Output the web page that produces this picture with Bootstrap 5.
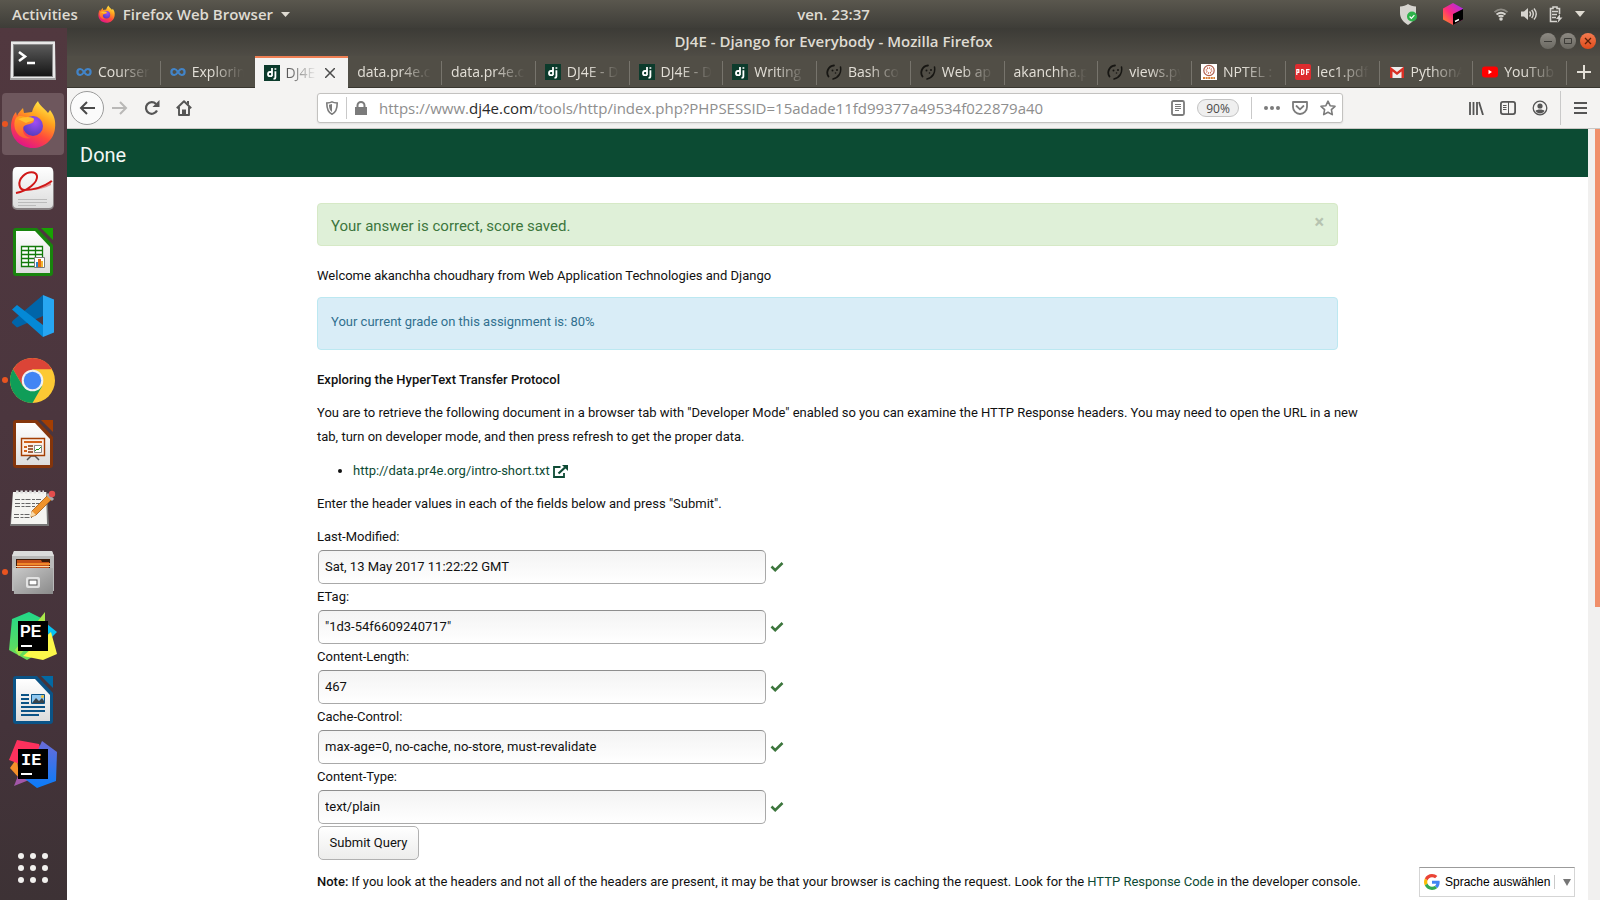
<!DOCTYPE html>
<html lang="en">
<head>
<meta charset="utf-8">
<meta name="viewport" content="width=device-width, initial-scale=1">
<title>DJ4E - Django for Everybody</title>
<link href="https://cdn.jsdelivr.net/npm/bootstrap@5.3.0/dist/css/bootstrap.min.css" rel="stylesheet">
<style>
  body { font-family: "Open Sans", "Noto Sans", sans-serif; font-size: 15px; background: #fff; }
  svg { display: block; flex: none; }
  a { text-decoration: none; }
  button { font: inherit; color: inherit; }
  .plain-btn { background: none; border: 0; padding: 0; }

  /* desktop panel */
  .desk-panel { display: grid; grid-template-columns: 67px 1fr auto 1fr; height: 28px; line-height: 20px; background: linear-gradient(#5a574e, #3e3d38); color: #dfdbd2; font-weight: 600; }
  .desk-left { grid-column: 1 / 3; padding-left: 12px; gap: 20px; }
  .desk-right { padding-right: 15px; }
  .tray-shield { margin-right: 26px; }
  .tray-cube { margin-right: 30px; }
  .tray-icon { margin-right: 12px; }

  /* launcher */
  .dock { width: 67px; background: linear-gradient(#51383f, #4b363e 45%, #44333a 80%, #3d3235); }
  .dock-item { height: 64px; width: 67px; padding-right: 2px; position: relative; }
  .dock-item.current::before { content: ""; position: absolute; inset: 1px 3px 1px 2px; border-radius: 4px; background: #6e575d; }
  .dock-item.running::after { content: ""; position: absolute; left: 2px; top: 29px; width: 6px; height: 6px; border-radius: 50%; background: #e95420; }
  .dock-item svg { position: relative; }

  /* browser window */
  .browser-col { min-width: 0; }
  .fill-row { min-height: 0; }
  .title-row { display: grid; grid-template-columns: 1fr auto 1fr; height: 28px; background: linear-gradient(#3c3b36, #4f4c45); color: #dfdbd2; font-weight: 600; line-height: 20px; padding-bottom: 2px; }
  .win-dot { width: 16px; height: 16px; border-radius: 50%; background: linear-gradient(#8d8a83, #6b6962); }
  .win-dot.close-dot { background: linear-gradient(#f47b50, #df4b1b); }
  .tab-row { height: 32px; background: #514e46; border-bottom: 1px solid #38362f; }
  .tab-item { flex: 1 1 0; min-width: 0; padding: 0 9px; gap: 6px; color: #e3dfd7; font-size: 14px; position: relative; height: 31px; }
  .tab-item::after { content: ""; position: absolute; right: 0; top: 5px; height: 24px; width: 1px; background: #77746c; }
  .tab-item.on { background: #f4f3f2; color: #4c4c4c; height: 32px; border-top: 2px solid #ef7f54; }
  .tab-item.on::after, .tab-item.before-on::after { display: none; }
  .tab-label { overflow: hidden; white-space: nowrap; flex: 1; line-height: 22px; -webkit-mask-image: linear-gradient(to left, transparent 2px, #000 34px); mask-image: linear-gradient(to left, transparent 2px, #000 34px); }
  .new-tab { width: 33px; color: #e3dfd7; }

  .tool-row { height: 41px; background: #f4f3f2; border-bottom: 1px solid #c9c7c5; color: #5a5a5a; }
  .tool-left { width: 250px; padding-left: 3px; }
  .tool-left .plain-btn { width: 32px; }
  .tool-left .back-btn { width: 34px; height: 34px; border: 1px solid #9b9b9b; border-radius: 50%; background: #fbfbfb; }
  .tool-right { width: 257px; }
  .tool-right .menu-btn { margin: 0 13px; }
  .url-box { height: 30px; background: #fff; border: 1px solid #c3c2c0; border-radius: 3px; box-shadow: 0 1px 2px rgba(0,0,0,.08); color: #7b7b7b; padding-right: 6px; }
  .url-text { line-height: 24px; color: #8e8e8e; white-space: nowrap; overflow: hidden; }
  .url-text b { font-weight: 400; color: #2a2a2a; }
  .url-tools { gap: 12px; }
  .zoom-pill { width: 42px; height: 18px; line-height: 15px; border: 1px solid #c3c3c3; border-radius: 9px; background: #efefef; color: #4a4a4a; font-size: 12px; }
  .v-line { width: 1px; height: 22px; background: #c9c9c9; }
  .v-line.tall { height: 34px; margin-left: 12px; }
  .v-line.short { height: 14px; }

  /* the course tool page */
  .web-view { font-family: Roboto, sans-serif; font-size: 13px; line-height: 24px; color: #111; }
  .web-view a { color: #0d4a34; }
  .done-bar { background: #0c4b33; height: 48px; padding: 3px 13px 0; font-size: 20px; }
  .done-bar a { color: #f3f7f5; }
  .tool-body { max-width: 1021px; padding-top: 26px; }
  .flash { border: 1px solid; border-radius: 4px; padding: 0 13px; margin-bottom: 18px; }
  .flash-ok { color: #3c763d; background: #dff0d8; border-color: #d6e9c6; font-size: 15px; height: 43px; padding-top: 3px; }
  .flash-info { color: #31708f; background: #d9edf7; border-color: #bce8f1; padding-top: 12px; padding-bottom: 15px; }
  .flash-x { color: #b6c3b0; font: 700 18px/18px Roboto, sans-serif; margin-bottom: 9px; }
  .tool-body p { margin-bottom: 9px; }
  .tool-body .para-gap { margin-bottom: 10px; }
  .tool-body .long-copy { margin-right: -24px; }
  .tool-body ul { margin-bottom: 9px; padding-left: 36px; }
  .tool-body b { font-weight: 500; }
  .field-box { width: 448px; height: 34px; margin: 1px 4px 1px 1px; padding: 0 6px 1px; border: 1px solid #a9a9a9; border-top-color: #8e8e8e; border-radius: 5px; background: linear-gradient(#f3f3f3, #fff); color: #111; }
  .send-btn { height: 34px; width: 101px; margin: 1px 0 10px 1px; border: 1px solid #b1b1b1; border-radius: 5px; background: linear-gradient(#fff, #ededec); color: #111; }
  .lang-pick { position: absolute; right: 13px; bottom: 3px; width: 156px; height: 30px; border: 1px solid #d5d5d5; border-top-color: #9b9b9b; background: #fff; padding-left: 4px; }
  .lang-pick select { appearance: none; border: 0; background: none; padding: 0; margin-left: 5px; width: 109px; font: 12px/20px "Liberation Sans", sans-serif; color: #000; }
  .scroll-track { width: 12px; background: #f1f0ef; padding-left: 7px; }
  .scroll-thumb { height: 62%; background: #f08f6a; }
</style>
</head>
<body class="vh-100 d-flex flex-column overflow-hidden">

<svg width="0" height="0" class="position-absolute" aria-hidden="true">
  <defs>
    <linearGradient id="ffBody" x1="0.8" y1="0" x2="0.3" y2="1"><stop offset="0" stop-color="#fff44f"/><stop offset=".35" stop-color="#ffa21e"/><stop offset=".65" stop-color="#ff4a3c"/><stop offset="1" stop-color="#e0128c"/></linearGradient>
    <radialGradient id="ffGlobe" cx=".6" cy=".3" r=".8"><stop offset="0" stop-color="#a04df5"/><stop offset="1" stop-color="#4a3bb8"/></radialGradient>
    <linearGradient id="ffHead" x1="0" y1="0" x2="0" y2="1"><stop offset="0" stop-color="#ffa21f"/><stop offset="1" stop-color="#ff5a36"/></linearGradient>
    <linearGradient id="paper" x1="0" y1="0" x2="0" y2="1"><stop offset="0" stop-color="#fff"/><stop offset="1" stop-color="#dcdcdc"/></linearGradient>
    <linearGradient id="cubeA" x1="0" y1="1" x2="1" y2="0"><stop offset="0" stop-color="#ff9419"/><stop offset=".45" stop-color="#ff2a7b"/><stop offset="1" stop-color="#9c2bff"/></linearGradient>
    <linearGradient id="grayBox" x1="0" y1="0" x2="1" y2="1"><stop offset="0" stop-color="#c9c9c9"/><stop offset="1" stop-color="#8a8a8a"/></linearGradient>
    <linearGradient id="screen" x1="0" y1="0" x2="0" y2="1"><stop offset="0" stop-color="#5a5a5a"/><stop offset="1" stop-color="#161616"/></linearGradient>
    <linearGradient id="ieBlue" x1="0" y1="0" x2="0" y2="1"><stop offset="0" stop-color="#6b6bd8"/><stop offset="1" stop-color="#087cfa"/></linearGradient>
    <linearGradient id="peGreen" x1="0" y1="0" x2="0" y2="1"><stop offset="0" stop-color="#21d789"/><stop offset="1" stop-color="#6fdd55"/></linearGradient>
    <symbol id="firefox" viewBox="0 0 46 48">
      <path fill="url(#ffBody)" d="M28 1c1 4 7 8 10 12l2-3c4 5 6 11 5 18-1 12-11 20-22 20C10 48 1 38 1 27c0-6 2-12 5-15l1 4c1-3 4-6 6-8l1 5 8-1c1-4 3-8 6-11z"/>
      <circle cx="23" cy="26" r="10" fill="url(#ffGlobe)"/>
      <path fill="url(#ffHead)" d="M6 18c3-3 8-2 11 0 2 1 5 1 7 2 0 3-4 4-8 5-3 1-3 3-3 5 0 4 3 7 8 8-8 2-14-3-16-9-1-4-1-8 1-11z"/>
      <path fill="#ffc02e" d="M8 19c5-2 11-3 15-1 2 1 1 2-1 3-3 1-5 1-6 2z"/>
    </symbol>
    <symbol id="coursera" viewBox="0 0 16 16"><path fill="none" stroke="#4284c8" stroke-width="2.200" d="M8 8C6.500 5.600 5.500 5 4.400 5a3 3 0 0 0 0 6C6 11 7 9.500 8 8s2-3 3.600-3a3 3 0 0 1 0 6C10.500 11 9.500 10.400 8 8z"/></symbol>
    <symbol id="djicon" viewBox="0 0 16 16"><path fill="#0c3b2c" d="M0 0h16v16H0z"/><path fill="none" stroke="#fff" stroke-width="1.800" d="M8 3v8.200M8 7H5.900C4.500 7 4 8 4 9.200s.7 2 2 2H8M11.400 6.200v6c0 1.200-.6 1.600-1.900 1.600M11.400 3.200v1.600"/></symbol>
    <symbol id="pyany" viewBox="0 0 16 16"><g fill="none" stroke="#171613" stroke-linecap="round"><path stroke-width="1.800" d="M2.500 12.500C-.5 8 2.500 2 8 1.500"/><path stroke-width="1.500" d="M14.500 3C15.500 8.500 13 13.500 7 15"/></g><circle cx="6.500" cy="6.500" r="1" fill="#171613"/><circle cx="11" cy="6" r="1" fill="#171613"/><circle cx="9.500" cy="9" r=".8" fill="#171613"/></symbol>
    <symbol id="tick" viewBox="0 0 14 12"><path fill="none" stroke="#3c763d" stroke-width="2.600" d="M1.500 5.500 5.200 9.200 12.500 2"/></symbol>
  </defs>
</svg>

<header class="desk-panel align-items-center flex-shrink-0">
  <div class="desk-left d-flex align-items-center">
    <button class="plain-btn">Activities</button>
    <button class="plain-btn d-flex align-items-center gap-1"><svg width="17" height="18" class="me-1"><use href="#firefox"/></svg>Firefox Web Browser
      <svg width="9" height="5" class="ms-1"><path fill="#dfdbd2" d="M0 0h9L4.500 5z"/></svg></button>
  </div>
  <div>ven. 23:37</div>
  <div class="desk-right d-flex align-items-center justify-content-end">
    <svg width="18" height="21" viewBox="0 0 18 21" class="tray-shield"><path fill="#d6d4cf" d="M9 0c2 1.500 5 2.300 8 2.500V9c0 5-3 9-8 12C4 18 1 14 1 9V2.500C4 2.300 7 1.500 9 0z"/><circle cx="13" cy="12.500" r="5" fill="#2eb24a"/><path d="m10.600 12.500 1.800 1.800 3-3.200" fill="none" stroke="#fff" stroke-width="1.200"/></svg>
    <svg width="20" height="22" viewBox="0 0 20 22" class="tray-cube"><path fill="url(#cubeA)" d="M10 0l10 5.500v11L10 22 0 16.500v-11z"/><path fill="#000" d="M10 11l10-5v10.500L10 22z"/><path stroke="#fff" stroke-width="1.400" d="m12 18.500 4-2"/></svg>
    <svg width="16" height="14" viewBox="0 0 16 14" class="tray-icon"><g fill="none" stroke="#d6d4cf" stroke-width="1.800"><path d="M1.500 5.200c4-3.600 9-3.600 13 0" opacity=".45"/><path d="M3.500 7.500c3-2.400 6-2.400 9 0M5.500 9.600c1.700-1.200 3.300-1.200 5 0"/></g><circle cx="8" cy="12" r="1.800" fill="#d6d4cf"/></svg>
    <svg width="16" height="14" viewBox="0 0 16 14" class="tray-icon"><path fill="#d6d4cf" d="M0 4.500h3L7 1v12L3 9.500H0z"/><g fill="none" stroke="#d6d4cf" stroke-width="1.400"><path d="M8.500 4.500c1.300 1.500 1.300 3.500 0 5M10.700 3c2 2.500 2 5.500 0 8M13 1.500c2.700 3.300 2.700 7.700 0 11"/></g></svg>
    <svg width="14" height="17" viewBox="0 0 14 17" class="tray-icon"><path fill="none" stroke="#d6d4cf" stroke-width="1.600" d="M8 15.500H1.500v-13H4v-1.500h4v1.500h2.500V8"/><path stroke="#d6d4cf" stroke-width="1.500" d="M3 5.500h6M3 8.500h5M3 11.500h4"/><path fill="#d6d4cf" d="M11 8l-4 5h2.500L8.500 17l5-5.500H11z"/></svg>
    <svg width="10" height="6"><path fill="#dfdbd2" d="M0 0h10L5 6z"/></svg>
  </div>
</header>

<div class="fill-row d-flex flex-grow-1">
  <nav class="dock d-flex flex-column flex-shrink-0" aria-label="Launcher">
    <a href="#" class="dock-item d-flex align-items-center justify-content-center" aria-label="Terminal"><svg width="46" height="39" viewBox="0 0 46 39"><path fill="#a5a5a5" d="M1 0h44l1 39H0z"/><path fill="#e8e8e8" d="M1 1h44v36H1z"/><path fill="#8b8b8b" d="M3 3h40v33H3z"/><path fill="url(#screen)" d="M4 4h38v31H4z"/><path fill="none" stroke="#fff" stroke-width="2.600" d="m9 11 6 4.500-6 4.500M17 22h8"/></svg></a>
    <a href="#" class="dock-item current running d-flex align-items-center justify-content-center" aria-label="Firefox"><svg width="46" height="48"><use href="#firefox"/></svg></a>
    <a href="#" class="dock-item d-flex align-items-center justify-content-center" aria-label="Document viewer"><svg width="42" height="43" viewBox="0 0 42 43"><rect x="0" y="1" width="42" height="42" rx="5" fill="#8a8385"/><rect x="1" y="0" width="40" height="41" rx="4" fill="url(#paper)"/><path fill="none" stroke="#d01818" stroke-width="2" d="M4 26C16 24 26 15 25 9c-1-5-9-5-14 0-6 6-4 14 2 14 10 0 18-3 27-9"/><path fill="#d01818" opacity=".45" d="M13 23c10 0 19-3 26-10v5c-8 4-16 6-26 5z"/><path stroke="#bbb" d="M6 32.500h29M6 35.500h29M6 38.500h18"/></svg></a>
    <a href="#" class="dock-item d-flex align-items-center justify-content-center" aria-label="Calc"><svg width="40" height="48" viewBox="0 0 40 48"><path fill="#18840d" d="M3 0h21l16 17v28a3 3 0 0 1-3 3H3a3 3 0 0 1-3-3V3a3 3 0 0 1 3-3z"/><path fill="#18a303" d="M28 0h12v12z"/><path fill="url(#paper)" d="M3 3h19l15 16v26H3z"/><path fill="#fff" stroke="#127a0a" stroke-width="1.300" d="M8.500 18.500h21v20h-21zM8.500 22.500h21M8.500 26.500h21M8.500 30.500h21M8.500 34.500h21M15.500 18.500v20M22.500 18.500v20"/><path fill="#fff" stroke="#7a7a7a" d="M21.500 29.500h10v10h-10z"/><path fill="#2c85c7" d="M23 34h2v5h-2z"/><path fill="#e56a10" d="M25 31h3v8h-3z"/><path fill="#f2b632" d="M28 33h2v6h-2z"/></svg></a>
    <a href="#" class="dock-item d-flex align-items-center justify-content-center" aria-label="Visual Studio Code"><svg width="42" height="42" viewBox="0 0 42 42"><path fill="#0065a9" d="M31 10v11L5 32.500 0 28c0-1 0-1.500 1-2.500L31 0z"/><path fill="#0489d6" d="m5 10 26 20v12L0 14.500z"/><path fill="#27a6f2" d="m31 0 11 4.500v33L31 42z"/></svg></a>
    <a href="#" class="dock-item running d-flex align-items-center justify-content-center" aria-label="Chrome"><svg width="45" height="45" viewBox="-22.500 -22.500 45 45"><circle r="22.500" fill="#fcc934"/><path fill="#db4437" d="M-19.500-11.200A22.500 22.500 0 0 1 19.500-11.200H0L-9.700 5.600z"/><path fill="#0f9d58" d="M-19.500-11.200A22.500 22.500 0 0 0 0 22.500L9.700 5.600-9.700 5.600z"/><circle r="10.800" fill="#f1f1f1"/><circle r="8.700" fill="#4285f4"/></svg></a>
    <a href="#" class="dock-item d-flex align-items-center justify-content-center" aria-label="Impress"><svg width="40" height="48" viewBox="0 0 40 48"><path fill="#84350b" d="M3 0h21l16 17v28a3 3 0 0 1-3 3H3a3 3 0 0 1-3-3V3a3 3 0 0 1 3-3z"/><path fill="#a33e03" d="M28 0h12v12z"/><path fill="url(#paper)" d="M3 3h19l15 16v26H3z"/><path stroke="#555" stroke-width="1.500" fill="none" d="m14 40 4-4h4l4 4"/><path fill="#fbeee5" stroke="#a33e03" stroke-width="1.400" d="M8.500 18.500h23v17h-23z"/><path fill="#d36118" d="M11 21h18v2H11zM11 26h3v2h-3zM11 30h3v2h-3z"/><path stroke="#84350b" stroke-width="1.500" d="M15 26h5M15 29h5M15 32h5"/><path fill="#fff" stroke="#888" d="M21.500 25.500h7v7h-7z"/><path fill="none" stroke="#1d9b1d" d="m22 31 2-2 1 1 3-3"/></svg></a>
    <a href="#" class="dock-item d-flex align-items-center justify-content-center" aria-label="Text editor"><svg width="46" height="38" viewBox="0 0 46 38"><path fill="#777" d="M3 3h34l2 34H0z"/><path fill="#f4f4f1" d="M3 3h33l1 32H1z"/><path stroke="#ddd" stroke-width="3" stroke-dasharray="2.500 1.900" d="M6 3h28"/><path stroke="#666" stroke-dasharray="5 1.500 3 1" d="M5 10.500h27M5 14.500h27M5 17.500h22M4 25.500h20M4 28.500h18"/><path fill="#f0932b" stroke="#a65b12" stroke-width=".8" d="M22 22 38 6l4 4-16 16-5 2z"/><path fill="#f7d9a8" d="m22 22 4 4-6 2z"/><path stroke="#aaa" stroke-width="3" d="m37 5 6 6"/><circle cx="42" cy="5" r="3.200" fill="#e24d4d"/></svg></a>
    <a href="#" class="dock-item running d-flex align-items-center justify-content-center" aria-label="Files"><svg width="42" height="43" viewBox="0 0 42 43"><path fill="#b9b9b9" d="M2 0h38l2 5v35H0V5z"/><path fill="#dcdcdc" d="M2 0h38l2 5H0z"/><path fill="#3a1a0a" d="M4 8h34v10H4z"/><path fill="#c5501a" d="M5 9h24l1 2h7v8H5z"/><path fill="#f0892b" d="M5 12h33v2H5z"/><path fill="#fbd9a6" d="M4 15h34v1H4z"/><path fill="url(#grayBox)" d="M1 17h40v26H2z"/><rect x="14" y="26" width="14" height="11" rx="2" fill="#e2e2e2"/><rect x="17" y="29" width="8" height="5" fill="#fff" stroke="#555"/></svg></a>
    <a href="#" class="dock-item d-flex align-items-center justify-content-center" aria-label="PyCharm Edu"><svg width="48" height="48" viewBox="0 0 48 48"><path fill="#07c3f2" d="m38 12 10 8-8 8z"/><path fill="url(#peGreen)" d="M3 7 20 0l12 6 6 30-20 12L0 38z"/><path fill="#a9e94a" d="M36 0v14L10 44 6 38z"/><path fill="#fcf84a" d="m42 20 6 22-14 6-20-4z"/><path fill="#000" d="M9 9h30v30H9z"/><text x="11" y="25" fill="#fff" font-family="Liberation Sans, sans-serif" font-weight="700" font-size="16">PE</text><path fill="#fff" d="M12 33h11v2H12z"/></svg></a>
    <a href="#" class="dock-item d-flex align-items-center justify-content-center" aria-label="Writer"><svg width="40" height="48" viewBox="0 0 40 48"><path fill="#0b5386" d="M3 0h21l16 17v28a3 3 0 0 1-3 3H3a3 3 0 0 1-3-3V3a3 3 0 0 1 3-3z"/><path fill="#0369a3" d="M28 0h12v12z"/><path fill="url(#paper)" d="M3 3h19l15 16v26H3z"/><path stroke="#0b5386" stroke-width="2" d="M8 19h8M8 23h8M8 27h8M8 31h24M8 35h24M8 39h18"/><path fill="#8fc7ef" stroke="#0b5386" d="M18.500 18.500h13v9h-13z"/><path fill="#39434a" d="m19 27 4-5 3 3 3-3 2 3v2z"/><circle cx="29.500" cy="20.500" r="1.500" fill="#f3c23b"/></svg></a>
    <a href="#" class="dock-item d-flex align-items-center justify-content-center" aria-label="IntelliJ Edu"><svg width="48" height="48" viewBox="0 0 48 48"><path fill="#f5912a" d="m8 18-7 10 9 10z"/><path fill="#fe315d" d="M8 0l22 4 6 18-20 4L0 20z"/><path fill="#a257a8" d="M12 28 5 46l30-12z"/><path fill="url(#ieBlue)" d="M33 1l15 11-1 29-19 7-12-9z"/><path fill="#000" d="M9 9h30v30H9z"/><text x="12" y="25" fill="#fff" font-family="Liberation Mono, monospace" font-weight="700" font-size="17">IE</text><path fill="#fff" d="M12 33h11v2H12z"/></svg></a>
    <a href="#" class="dock-item d-flex align-items-center justify-content-center mt-auto" aria-label="Show applications"><svg width="30" height="30" viewBox="0 0 30 30" fill="#f2f0ee"><circle cx="3" cy="3" r="3"/><circle cx="15" cy="3" r="3"/><circle cx="27" cy="3" r="3"/><circle cx="3" cy="15" r="3"/><circle cx="15" cy="15" r="3"/><circle cx="27" cy="15" r="3"/><circle cx="3" cy="27" r="3"/><circle cx="15" cy="27" r="3"/><circle cx="27" cy="27" r="3"/></svg></a>
  </nav>

  <div class="browser-col d-flex flex-column flex-grow-1">
    <div class="title-row align-items-center flex-shrink-0">
      <span></span><span>DJ4E - Django for Everybody - Mozilla Firefox</span>
      <div class="d-flex justify-content-end gap-1 pe-1">
        <button class="plain-btn win-dot" aria-label="Minimize"><svg width="16" height="16"><path stroke="#3c3b37" d="M4 8.500h8"/></svg></button>
        <button class="plain-btn win-dot" aria-label="Maximize"><svg width="16" height="16"><path fill="none" stroke="#3c3b37" d="M4.500 5.500h7v5h-7z"/></svg></button>
        <button class="plain-btn win-dot close-dot" aria-label="Close"><svg width="16" height="16"><path stroke="#5a2008" stroke-width="1.300" d="m5 5 6 6m0-6-6 6"/></svg></button>
      </div>
    </div>

    <div class="tab-row d-flex flex-shrink-0">
      <a href="#" class="tab-item d-flex align-items-center"><svg width="16" height="16"><use href="#coursera"/></svg><span class="tab-label">Coursera</span></a>
      <a href="#" class="tab-item before-on d-flex align-items-center"><svg width="16" height="16"><use href="#coursera"/></svg><span class="tab-label">Exploring</span></a>
      <a href="#" class="tab-item on d-flex align-items-center"><svg width="16" height="16"><use href="#djicon"/></svg><span class="tab-label">DJ4E</span><svg width="10" height="10" class="me-1"><path stroke="#4c4c4c" stroke-width="1.500" d="m0 0 10 10M10 0 0 10"/></svg></a>
      <a href="#" class="tab-item d-flex align-items-center"><span class="tab-label">data.pr4e.c</span></a>
      <a href="#" class="tab-item d-flex align-items-center"><span class="tab-label">data.pr4e.c</span></a>
      <a href="#" class="tab-item d-flex align-items-center"><svg width="16" height="16"><use href="#djicon"/></svg><span class="tab-label">DJ4E - D</span></a>
      <a href="#" class="tab-item d-flex align-items-center"><svg width="16" height="16"><use href="#djicon"/></svg><span class="tab-label">DJ4E - D</span></a>
      <a href="#" class="tab-item d-flex align-items-center"><svg width="16" height="16"><use href="#djicon"/></svg><span class="tab-label">Writing</span></a>
      <a href="#" class="tab-item d-flex align-items-center"><svg width="16" height="16"><use href="#pyany"/></svg><span class="tab-label">Bash co</span></a>
      <a href="#" class="tab-item d-flex align-items-center"><svg width="16" height="16"><use href="#pyany"/></svg><span class="tab-label">Web ap</span></a>
      <a href="#" class="tab-item d-flex align-items-center"><span class="tab-label">akanchha.p</span></a>
      <a href="#" class="tab-item d-flex align-items-center"><svg width="16" height="16"><use href="#pyany"/></svg><span class="tab-label">views.py</span></a>
      <a href="#" class="tab-item d-flex align-items-center"><svg width="16" height="16" viewBox="0 0 16 16"><path fill="#fff" d="M0 0h16v16H0z"/><circle cx="8" cy="6.500" r="5.200" fill="none" stroke="#b0604f" stroke-width="1.200"/><circle cx="8" cy="6.500" r="2.600" fill="none" stroke="#c4563d" stroke-width="1.500" stroke-dasharray="1 1"/><path stroke="#d98138" stroke-width="2" stroke-dasharray="2 .6" d="M2 14h12"/></svg><span class="tab-label">NPTEL :</span></a>
      <a href="#" class="tab-item d-flex align-items-center"><svg width="16" height="16" viewBox="0 0 16 16"><rect width="16" height="16" rx="2" fill="#dd2c2f"/><g fill="none" stroke="#fff" stroke-width="1.200"><path d="M1.800 11V5.600h2v2.800h-2M6.600 5.600h1.200l1 1v2.900l-1 1H6.600zM11.600 11V5.600h3M11.600 8.200h2.400"/></g></svg><span class="tab-label">lec1.pdf</span></a>
      <a href="#" class="tab-item d-flex align-items-center"><svg width="16" height="16" viewBox="0 0 16 16"><path fill="#eee" d="M1 3h14v11H1z"/><path fill="#d93025" d="M1 2.500 8 8l7-5.500v11.500h-2.500V7.500L8 11 3.500 7.500V14H1z"/></svg><span class="tab-label">PythonA</span></a>
      <a href="#" class="tab-item d-flex align-items-center"><svg width="16" height="16" viewBox="0 0 16 16"><rect y="2.500" width="16" height="11" rx="3" fill="#f00"/><path fill="#fff" d="M6.500 5.800v4.400L10 8z"/></svg><span class="tab-label">YouTub</span></a>
      <button class="plain-btn new-tab d-flex align-items-center justify-content-center" aria-label="New tab"><svg width="14" height="14"><path stroke="currentColor" stroke-width="2" d="M7 0v14M0 7h14"/></svg></button>
    </div>

    <div class="tool-row d-flex align-items-center flex-shrink-0">
      <div class="tool-left d-flex align-items-center">
        <button class="plain-btn back-btn d-flex align-items-center justify-content-center" aria-label="Back"><svg width="16" height="14"><path fill="none" stroke="#4a4a4a" stroke-width="2" d="M16 7H2M8 1 2 7l6 6"/></svg></button>
        <button class="plain-btn d-flex justify-content-center" aria-label="Forward"><svg width="16" height="14"><path fill="none" stroke="#b9b8b7" stroke-width="2" d="M0 7h14M8 1l6 6-6 6"/></svg></button>
        <button class="plain-btn d-flex justify-content-center" aria-label="Reload"><svg width="16" height="16" viewBox="0 0 16 16"><path fill="none" stroke="#555" stroke-width="2.200" d="M13 10.500A5.800 5.800 0 1 1 12 4"/><path fill="#555" d="M15.500 0v7H8.500z"/></svg></button>
        <button class="plain-btn d-flex justify-content-center" aria-label="Home"><svg width="16" height="16" viewBox="0 0 16 16"><path fill="none" stroke="#555" stroke-width="1.900" stroke-linejoin="round" d="M.8 8.200 8 1.200l7.200 7M3 7v8h10V7"/><path fill="#555" d="M6 15V9.500h4V15zM11 1h2v4l-2-2z"/></svg></button>
      </div>
      <div class="url-box d-flex align-items-center flex-grow-1">
        <svg width="12" height="14" viewBox="0 0 12 14" class="ms-2"><path fill="none" stroke="#7b7b7b" stroke-width="1.600" d="M6 .9c1.500.8 3.500 1 5.200 1.100C11.200 8 10 11.500 6 13.200 2 11.500.8 8 .8 2 2.500 1.900 4.500 1.700 6 .9z"/><path fill="#7b7b7b" d="M6 3v8C3.800 9.500 3 7.500 3 3.800z"/></svg>
        <div class="v-line ms-2"></div>
        <svg width="12" height="14" viewBox="0 0 12 14" class="ms-2"><path fill="#7b7b7b" d="M0 6h12v8H0z"/><path fill="none" stroke="#7b7b7b" stroke-width="2" d="M2.500 7V4.500a3.500 3.500 0 0 1 7 0V7"/></svg>
        <div class="url-text flex-grow-1 ms-2 ps-1">https://www.<b>dj4e.com</b>/tools/http/index.php?PHPSESSID=15adade11fd99377a49534f022879a40</div>
        <div class="url-tools d-flex align-items-center">
          <svg width="14" height="16" viewBox="0 0 14 16"><rect x="1" y="1" width="12" height="14" rx="1.500" fill="none" stroke="#7b7b7b" stroke-width="1.800"/><path stroke="#7b7b7b" d="M4 4.500h6M4 6.500h6M4 8.500h6M4 10.500h4"/></svg>
          <button class="plain-btn zoom-pill">90%</button>
          <div class="v-line"></div>
          <svg width="16" height="4" fill="#7b7b7b"><circle cx="2" cy="2" r="2"/><circle cx="8" cy="2" r="2"/><circle cx="14" cy="2" r="2"/></svg>
          <svg width="16" height="14" viewBox="0 0 16 14"><path fill="none" stroke="#7b7b7b" stroke-width="1.800" stroke-linejoin="round" d="M1 1h14v5a7 7 0 0 1-14 0z"/><path fill="none" stroke="#7b7b7b" stroke-width="1.800" stroke-linecap="round" d="M4.500 5 8 8.300 11.500 5"/></svg>
          <svg width="16" height="16" viewBox="0 0 16 16"><path fill="none" stroke="#7b7b7b" stroke-width="1.600" stroke-linejoin="round" d="m8 1.200 2.100 4.500 4.900.6-3.600 3.400.9 4.900L8 12.200l-4.300 2.400.9-4.900L1 6.300l4.900-.6z"/></svg>
        </div>
      </div>
      <div class="tool-right d-flex align-items-center justify-content-end">
        <svg width="16" height="14" viewBox="0 0 16 14"><path stroke="#555" stroke-width="1.800" d="M2 1v13M5.500 1v13M9 1v13M11 1l4 13"/></svg>
        <svg width="16" height="14" viewBox="0 0 16 14" class="ms-3"><rect x=".9" y=".9" width="14.200" height="12.200" rx="2" fill="none" stroke="#555" stroke-width="1.800"/><path stroke="#555" d="M8.500 1v12M3 4.500h3.500M3 6.500h3.500M3 8.500h3.500"/></svg>
        <svg width="16" height="16" viewBox="0 0 16 16" class="ms-3"><circle cx="8" cy="8" r="6.800" fill="none" stroke="#555" stroke-width="1.300"/><circle cx="8" cy="6" r="2.600" fill="#555"/><path fill="#555" d="M3.500 11c1-2 8-2 9 0-2 3.200-7 3.200-9 0z"/></svg>
        <div class="v-line tall"></div>
        <button class="plain-btn menu-btn" aria-label="Menu"><svg width="13" height="12"><path stroke="#555" stroke-width="2" d="M0 1h13M0 6h13M0 11h13"/></svg></button>
      </div>
    </div>

    <div class="fill-row d-flex flex-grow-1">
      <main class="web-view flex-grow-1 position-relative overflow-hidden">
        <div class="done-bar d-flex align-items-center"><a href="#">Done</a></div>
        <div class="tool-body mx-auto">
          <div class="flash flash-ok d-flex align-items-center justify-content-between" role="alert">
            <span>Your answer is correct, score saved.</span>
            <button class="plain-btn flash-x" aria-label="Dismiss">×</button>
          </div>
          <p>Welcome akanchha choudhary from Web Application Technologies and Django</p>
          <div class="flash flash-info">Your current grade on this assignment is: 80%</div>
          <p><b>Exploring the HyperText Transfer Protocol</b></p>
          <p class="long-copy para-gap">You are to retrieve the following document in a browser tab with "Developer Mode" enabled so you can examine the HTTP Response headers. You may need to open the URL in a new tab, turn on developer mode, and then press refresh to get the proper data.</p>
          <ul><li><a href="#">http://data.pr4e.org/intro-short.txt <svg width="15" height="13" viewBox="0 0 15 13" class="d-inline-block align-text-bottom"><path fill="none" stroke="#0d4a34" stroke-width="1.800" d="M7.500 2H1v10h10V8"/><path stroke="#0d4a34" stroke-width="2.200" d="m5.500 8.500 6.500-6"/><path fill="#0d4a34" d="M9 0h6v6z"/></svg></a></li></ul>
          <p>Enter the header values in each of the fields below and press "Submit".</p>
          <form>
            <label class="d-block" for="f1">Last-Modified:</label>
            <div class="d-flex align-items-center"><input id="f1" class="field-box" type="text" value="Sat, 13 May 2017 11:22:22 GMT"><svg width="14" height="12"><use href="#tick"/></svg></div>
            <label class="d-block" for="f2">ETag:</label>
            <div class="d-flex align-items-center"><input id="f2" class="field-box" type="text" value="&quot;1d3-54f6609240717&quot;"><svg width="14" height="12"><use href="#tick"/></svg></div>
            <label class="d-block" for="f3">Content-Length:</label>
            <div class="d-flex align-items-center"><input id="f3" class="field-box" type="text" value="467"><svg width="14" height="12"><use href="#tick"/></svg></div>
            <label class="d-block" for="f4">Cache-Control:</label>
            <div class="d-flex align-items-center"><input id="f4" class="field-box" type="text" value="max-age=0, no-cache, no-store, must-revalidate"><svg width="14" height="12"><use href="#tick"/></svg></div>
            <label class="d-block" for="f5">Content-Type:</label>
            <div class="d-flex align-items-center"><input id="f5" class="field-box" type="text" value="text/plain"><svg width="14" height="12"><use href="#tick"/></svg></div>
            <button type="button" class="send-btn d-block">Submit Query</button>
          </form>
          <p class="long-copy"><b>Note:</b> If you look at the headers and not all of the headers are present, it may be that your browser is caching the request. Look for the <a href="#">HTTP Response Code</a> in the developer console.</p>
        </div>
        <div class="lang-pick d-flex align-items-center">
          <svg width="16" height="16" viewBox="0 0 48 48"><path fill="#EA4335" d="M24 9.500c3.540 0 6.710 1.220 9.210 3.600l6.850-6.850C35.900 2.380 30.470 0 24 0 14.620 0 6.510 5.380 2.560 13.220l7.980 6.190C12.430 13.720 17.740 9.500 24 9.500z"/><path fill="#4285F4" d="M46.980 24.550c0-1.570-.15-3.090-.38-4.550H24v9.020h12.940c-.58 2.960-2.260 5.480-4.780 7.180l7.730 6c4.510-4.180 7.090-10.360 7.090-17.650z"/><path fill="#FBBC05" d="M10.530 28.590c-.48-1.450-.76-2.990-.76-4.590s.27-3.140.76-4.590l-7.980-6.190C.92 16.460 0 20.120 0 24c0 3.880.92 7.540 2.560 10.780z"/><path fill="#34A853" d="M24 48c6.480 0 11.930-2.130 15.890-5.810l-7.730-6c-2.150 1.450-4.920 2.300-8.160 2.300-6.260 0-11.570-4.220-13.470-9.910l-7.980 6.190C6.510 42.620 14.620 48 24 48z"/></svg>
          <select aria-label="Sprache"><option>Sprache auswählen</option></select>
          <div class="v-line short"></div>
          <svg width="8" height="7" class="ms-2"><path fill="#767676" d="M0 0h8L4 7z"/></svg>
        </div>
      </main>
      <div class="scroll-track flex-shrink-0"><div class="scroll-thumb"></div></div>
    </div>
  </div>
</div>
<script src="https://cdn.jsdelivr.net/npm/bootstrap@5.3.0/dist/js/bootstrap.bundle.min.js"></script>
</body>
</html>
